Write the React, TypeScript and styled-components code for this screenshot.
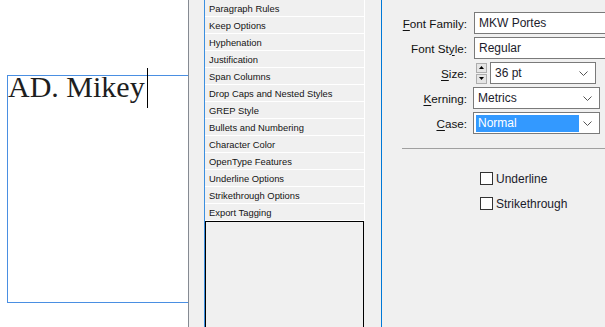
import React from 'react'
import styled, { createGlobalStyle } from 'styled-components'

const GlobalStyle = createGlobalStyle`
    html, body {
        margin: 0;
        padding: 0;
        background: #f0f0f0;
    }
    body {
        font-family: 'Liberation Sans', Arial, sans-serif;
    }
`

const Page = styled.div`
    display: flex;
    width: 605px;
    height: 327px;
    overflow: hidden;
    background: #f0f0f0;
`

const Canvas = styled.div`
    width: 189px;
    flex-shrink: 0;
    background: #ffffff;
    border-right: 1px solid #858a92;
    padding: 75px 0 0 7px;
    box-sizing: border-box;
    overflow: hidden;
`

const TextFrame = styled.div`
    width: 190px;
    height: 228px;
    box-sizing: border-box;
    border: 1px solid #4a8fe2;
`

const FrameText = styled.span`
    position: relative;
    display: inline-block;
    font-family: 'Liberation Serif', 'Times New Roman', serif;
    font-size: 30px;
    line-height: 21px;
    color: #1e1e1e;
    white-space: nowrap;
`

const Caret = styled.span`
    position: absolute;
    left: 100%;
    top: -8px;
    margin-left: 2px;
    width: 1px;
    height: 40px;
    background: #000;
`

const Middle = styled.div`
    width: 193px;
    flex-shrink: 0;
    box-sizing: border-box;
    padding-left: 15px;
    border-right: 1px solid #0078d7;
`

const List = styled.div`
    width: 161px;
    height: 100%;
    box-sizing: border-box;
    border-left: 1px solid #3b8fe0;
    display: flex;
    flex-direction: column;
`

const ListRow = styled.div`
    height: 16px;
    flex-shrink: 0;
    border-bottom: 1px solid #ffffff;
    border-right: 1px solid #ffffff;
    padding-left: 4px;
    display: flex;
    align-items: center;
    font-size: 9.4px;
    color: #141414;
    white-space: nowrap;
`

const EmptyBox = styled.div`
    width: 159px;
    height: 120px;
    box-sizing: border-box;
    border: 1px solid #000;
    border-bottom: none;
    flex-shrink: 0;
`

const Panel = styled.div`
    flex: 1;
    padding-top: 12px;
    overflow: hidden;
`

const Form = styled.div`
    display: grid;
    grid-template-columns: 85px 1fr;
    column-gap: 6px;
    row-gap: 3px;
`

const Label = styled.div`
    height: 22px;
    display: flex;
    align-items: center;
    justify-content: flex-end;
    font-size: 11.7px;
    color: #111;
    white-space: nowrap;

    u {
        text-underline-offset: 2px;
    }
`

const Field = styled.div`
    display: flex;
    align-items: center;
    gap: 3px;
    height: 22px;
`

const TextBox = styled.div<{ $width: number; $indent?: number }>`
    width: ${(p) => p.$width}px;
    height: 22px;
    margin-left: ${(p) => p.$indent ?? 0}px;
    box-sizing: border-box;
    border: 1px solid #7a7a7a;
    background: #fff;
    display: flex;
    align-items: center;
    padding: 0 7px 0 4px;
    font-size: 12px;
    color: #1b1b2b;
    flex-shrink: 0;
`

const Value = styled.span<{ $selected?: boolean }>`
    flex: 1;
    display: flex;
    align-items: center;
    height: 17px;
    margin-left: ${(p) => (p.$selected ? '-2px' : '0')};
    margin-right: ${(p) => (p.$selected ? '4px' : '0')};
    padding-left: ${(p) => (p.$selected ? '2px' : '0')};
    background: ${(p) => (p.$selected ? '#3399ff' : 'transparent')};
    color: ${(p) => (p.$selected ? '#fff' : 'inherit')};
`

const Spinner = styled.div`
    margin-left: 3px;
    width: 11px;
    height: 21px;
    display: flex;
    flex-direction: column;
    gap: 1px;
    flex-shrink: 0;
`

const SpinButton = styled.div`
    flex: 1;
    box-sizing: border-box;
    border: 1px solid #adadad;
    background: #e5e5e5;
    display: flex;
    align-items: center;
    justify-content: center;
`

const Separator = styled.div`
    margin: 14px 0 0 20px;
    height: 1px;
    background: #a0a0a0;
`

const Checks = styled.div`
    margin: 23px 0 0 98px;
    display: flex;
    flex-direction: column;
    gap: 12px;
`

const CheckRow = styled.label`
    display: flex;
    align-items: center;
    gap: 3px;
    height: 13px;
    font-size: 12px;
    color: #1b1b2b;
`

const CheckBox = styled.span`
    width: 13px;
    height: 13px;
    box-sizing: border-box;
    border: 1px solid #333;
    background: #fff;
`

const Chevron = () => (
    <svg width="9" height="5" viewBox="0 0 9 5">
        <polyline points="0.5,0.5 4.5,4.5 8.5,0.5" fill="none" stroke="#555" strokeWidth="1" />
    </svg>
)

const Triangle = ({ up }: { up?: boolean }) => (
    <svg width="5" height="3" viewBox="0 0 5 3">
        <polygon points={up ? '2.5,0 5,3 0,3' : '0,0 5,0 2.5,3'} fill="#000" />
    </svg>
)

const sections = [
    'Paragraph Rules',
    'Keep Options',
    'Hyphenation',
    'Justification',
    'Span Columns',
    'Drop Caps and Nested Styles',
    'GREP Style',
    'Bullets and Numbering',
    'Character Color',
    'OpenType Features',
    'Underline Options',
    'Strikethrough Options',
    'Export Tagging',
]

const App = () => {
    return (
        <>
            <GlobalStyle />
            <Page>
                <Canvas>
                    <TextFrame>
                        <FrameText>
                            AD. Mikey
                            <Caret />
                        </FrameText>
                    </TextFrame>
                </Canvas>
                <Middle>
                    <List>
                        {sections.map((s) => (
                            <ListRow key={s}>{s}</ListRow>
                        ))}
                        <EmptyBox />
                    </List>
                </Middle>
                <Panel>
                    <Form>
                        <Label>
                            <u>F</u>ont Family:
                        </Label>
                        <Field>
                            <TextBox $width={140} $indent={1}>
                                MKW Portes
                            </TextBox>
                        </Field>

                        <Label>
                            Font St<u>y</u>le:
                        </Label>
                        <Field>
                            <TextBox $width={140} $indent={1}>
                                Regular
                            </TextBox>
                        </Field>

                        <Label>
                            <u>S</u>ize:
                        </Label>
                        <Field>
                            <Spinner>
                                <SpinButton>
                                    <Triangle up />
                                </SpinButton>
                                <SpinButton>
                                    <Triangle />
                                </SpinButton>
                            </Spinner>
                            <TextBox $width={106}>
                                <Value>36 pt</Value>
                                <Chevron />
                            </TextBox>
                        </Field>

                        <Label>
                            <u>K</u>erning:
                        </Label>
                        <Field>
                            <TextBox $width={127}>
                                <Value>Metrics</Value>
                                <Chevron />
                            </TextBox>
                        </Field>

                        <Label>
                            <u>C</u>ase:
                        </Label>
                        <Field>
                            <TextBox $width={127}>
                                <Value $selected>Normal</Value>
                                <Chevron />
                            </TextBox>
                        </Field>
                    </Form>
                    <Separator />
                    <Checks>
                        <CheckRow>
                            <CheckBox />
                            Underline
                        </CheckRow>
                        <CheckRow>
                            <CheckBox />
                            Strikethrough
                        </CheckRow>
                    </Checks>
                </Panel>
            </Page>
        </>
    )
}

export default App
